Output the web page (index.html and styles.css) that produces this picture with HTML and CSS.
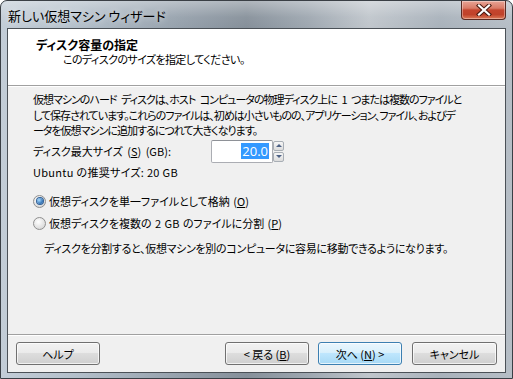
FILE: index.html
```html
<!DOCTYPE html>
<html lang="ja">
<head>
    <meta charset="UTF-8">
    <title>新しい仮想マシン ウィザード</title>
    <link rel="stylesheet" href="styles.css">
</head>
<body>
    <div class="window">
        <div class="titlebar">
            <span class="title">新しい仮想マシン ウィザード</span>
            <div class="close-btn">
                <svg width="16" height="12" viewBox="0 0 16 12">
                    <path d="M3 1.5 L13 10.5 M13 1.5 L3 10.5" stroke="#4a1a10" stroke-width="4.2" stroke-linecap="square"/>
                    <path d="M3 1.5 L13 10.5 M13 1.5 L3 10.5" stroke="#ffffff" stroke-width="2.2" stroke-linecap="square"/>
                </svg>
            </div>
        </div>

        <div class="client">
            <div class="header">
                <div class="header-title">ディスク容量の指定</div>
                <div class="header-sub">このディスクのサイズを指定してください。</div>
            </div>

            <div class="content">
                <p class="desc">仮想マシンのハード ディスクは、ホスト コンピュータの物理ディスク上に 1 つまたは複数のファイルと<br>して保存されています。これらのファイルは、初めは小さいものの、アプリケーション、ファイル、およびデ<br>ータを仮想マシンに追加するにつれて大きくなります。</p>

                <div class="size-row">
                    <span class="size-label">ディスク最大サイズ (<u>S</u>) (GB):</span>
                    <div class="spin">
                        <div class="spin-input"><span class="selected">20.0</span></div>
                        <div class="spin-buttons">
                            <div class="spin-btn"><span class="arrow-up"></span></div>
                            <div class="spin-btn"><span class="arrow-down"></span></div>
                        </div>
                    </div>
                </div>

                <div class="recommend">Ubuntu の推奨サイズ: 20 GB</div>

                <div class="radio-row first">
                    <span class="radio checked"></span>
                    <span>仮想ディスクを単一ファイルとして格納 (<u>O</u>)</span>
                </div>
                <div class="radio-row">
                    <span class="radio"></span>
                    <span>仮想ディスクを複数の 2 GB のファイルに分割 (<u>P</u>)</span>
                </div>

                <p class="note">ディスクを分割すると、仮想マシンを別のコンピュータに容易に移動できるようになります。</p>
            </div>

            <div class="footer">
                <button class="btn">ヘルプ</button>
                <div class="nav-buttons">
                    <button class="btn">&lt; 戻る (<u>B</u>)</button>
                    <button class="btn default">次へ (<u>N</u>) &gt;</button>
                    <button class="btn cancel">キャンセル</button>
                </div>
            </div>
        </div>
    </div>
</body>
</html>
```

FILE: styles.css
```css
body {
    margin: 0;
    font-family: "Noto Sans CJK JP", sans-serif;
    font-size: 11px;
    font-feature-settings: "palt";
    color: #000;
    background: #fff;
}

.window {
    width: 513px;
    height: 379px;
    box-sizing: border-box;
    padding: 0 6px 5px 6px;
    display: flex;
    flex-direction: column;
    border: 1px solid #3a3f45;
    border-radius: 7px 7px 0 0;
    background: linear-gradient(90deg, #c3cdd7 0%, #b3bfca 15%, #96a1ac 35%, #86909a 48%, #9ea7b0 60%, #c0c6cc 72%, #a9b2bb 86%, #b6bec6 100%);
}

.titlebar {
    height: 27px;
    display: flex;
    align-items: flex-start;
    margin: 0 -6px;
    padding: 0 6px 0 7px;
    border-radius: 7px 7px 0 0;
    background: linear-gradient(rgba(255,255,255,0.35), rgba(255,255,255,0.05) 60%, rgba(255,255,255,0));
}

.title {
    padding-top: 5px;
    font-size: 13px;
    color: #000;
    text-shadow: 0 0 6px rgba(255,255,255,0.8);
}

.close-btn {
    margin-left: auto;
    width: 45px;
    height: 19px;
    box-sizing: border-box;
    display: flex;
    align-items: center;
    justify-content: center;
    border: 1px solid #5a2a22;
    border-top: none;
    border-radius: 0 0 4px 4px;
    background: linear-gradient(#e8a496 0%, #d97a66 40%, #c4452e 50%, #c0422a 75%, #dc7a58 100%);
    box-shadow: inset 0 0 0 1px rgba(255,255,255,0.35);
}

.close-btn svg {
    display: block;
}

.client {
    flex: 1;
    display: flex;
    flex-direction: column;
    border: 1px solid #4b5157;
    background: #f0f0f0;
}

.header {
    height: 57px;
    box-sizing: border-box;
    padding: 8px 0 0 28px;
    background: #fff;
    border-bottom: 1px solid #a0a0a0;
}

.header-title {
    font-size: 12px;
    font-weight: bold;
    line-height: 15px;
}

.header-sub {
    padding-left: 27px;
    line-height: 15px;
    letter-spacing: -0.6px;
}

.content {
    flex: 1;
    padding: 5px 0 0 25px;
    border-top: 1px solid #fff;
}

.desc {
    margin: 0;
    line-height: 15.5px;
    white-space: nowrap;
    letter-spacing: -1px;
    word-spacing: 3px;
}

.size-row {
    display: flex;
    align-items: center;
    margin-top: 1px;
    height: 23px;
}

.size-label {
    width: 178px;
    word-spacing: 2px;
}

.spin {
    display: flex;
}

.spin-input {
    width: 62px;
    height: 23px;
    box-sizing: border-box;
    border: 1px solid #abadb3;
    border-top-color: #8e9197;
    border-radius: 2px;
    background: #fff;
    display: flex;
    align-items: center;
    justify-content: flex-end;
    padding-right: 3px;
    font-family: "Open Sans", "Noto Sans CJK JP", sans-serif;
    font-size: 13px;
}

.selected {
    background: #3399ff;
    color: #fff;
    line-height: 16px;
    padding: 0 1px;
}

.spin-buttons {
    display: flex;
    flex-direction: column;
    gap: 1px;
    padding: 1px 0;
}

.spin-btn {
    width: 11px;
    height: 10px;
    box-sizing: border-box;
    border: 1px solid #a8aeb5;
    border-radius: 2px;
    background: linear-gradient(#f6f6f6, #dcdcdc);
    display: flex;
    align-items: center;
    justify-content: center;
}

.arrow-up {
    border-left: 3px solid transparent;
    border-right: 3px solid transparent;
    border-bottom: 3px solid #4d6185;
}

.arrow-down {
    border-left: 3px solid transparent;
    border-right: 3px solid transparent;
    border-top: 3px solid #4d6185;
}

.recommend {
    margin-top: 2px;
    line-height: 15px;
    letter-spacing: 0.3px;
}

.radio-row {
    display: flex;
    align-items: center;
    gap: 3px;
    margin-top: 7px;
    line-height: 15px;
    word-spacing: 1px;
}

.radio-row.first {
    margin-top: 14px;
}

.radio {
    width: 13px;
    height: 13px;
    box-sizing: border-box;
    border-radius: 50%;
    border: 1px solid #8f8f8f;
    background: radial-gradient(circle at 40% 35%, #ffffff, #dcdcdc 70%, #c8c8c8);
    display: flex;
    align-items: center;
    justify-content: center;
}

.radio.checked::after {
    content: "";
    width: 6px;
    height: 6px;
    border-radius: 50%;
    background: radial-gradient(circle at 35% 35%, #a8dcff, #1b5ea8 80%);
    box-shadow: 0 0 0 1px #2f5f96;
}

.note {
    margin: 10px 0 0 11px;
    line-height: 15px;
    white-space: nowrap;
    letter-spacing: -0.3px;
}

.footer {
    height: 38px;
    box-sizing: border-box;
    padding: 7px 8px 0 8px;
    display: flex;
    align-items: flex-start;
    border-top: 1px solid #a0a0a0;
    box-shadow: inset 0 1px 0 #fff;
}

.nav-buttons {
    margin-left: auto;
    display: flex;
    gap: 9px;
}

.btn {
    width: 84px;
    height: 23px;
    padding: 0;
    border: 1px solid #707070;
    border-radius: 3px;
    font-family: inherit;
    font-size: 11px;
    font-feature-settings: "palt";
    color: #000;
    background: linear-gradient(#f2f2f2 0%, #ebebeb 45%, #dddddd 50%, #cfcfcf 100%);
    box-shadow: inset 0 0 0 1px rgba(255,255,255,0.7);
}

.btn.default {
    border-color: #3c7fb1;
    background: linear-gradient(#eaf6fd 0%, #d9f0fc 45%, #bee6fd 50%, #a7d9f5 100%);
}

.btn.cancel {
    width: 85px;
    margin-left: 1px;
}
```
